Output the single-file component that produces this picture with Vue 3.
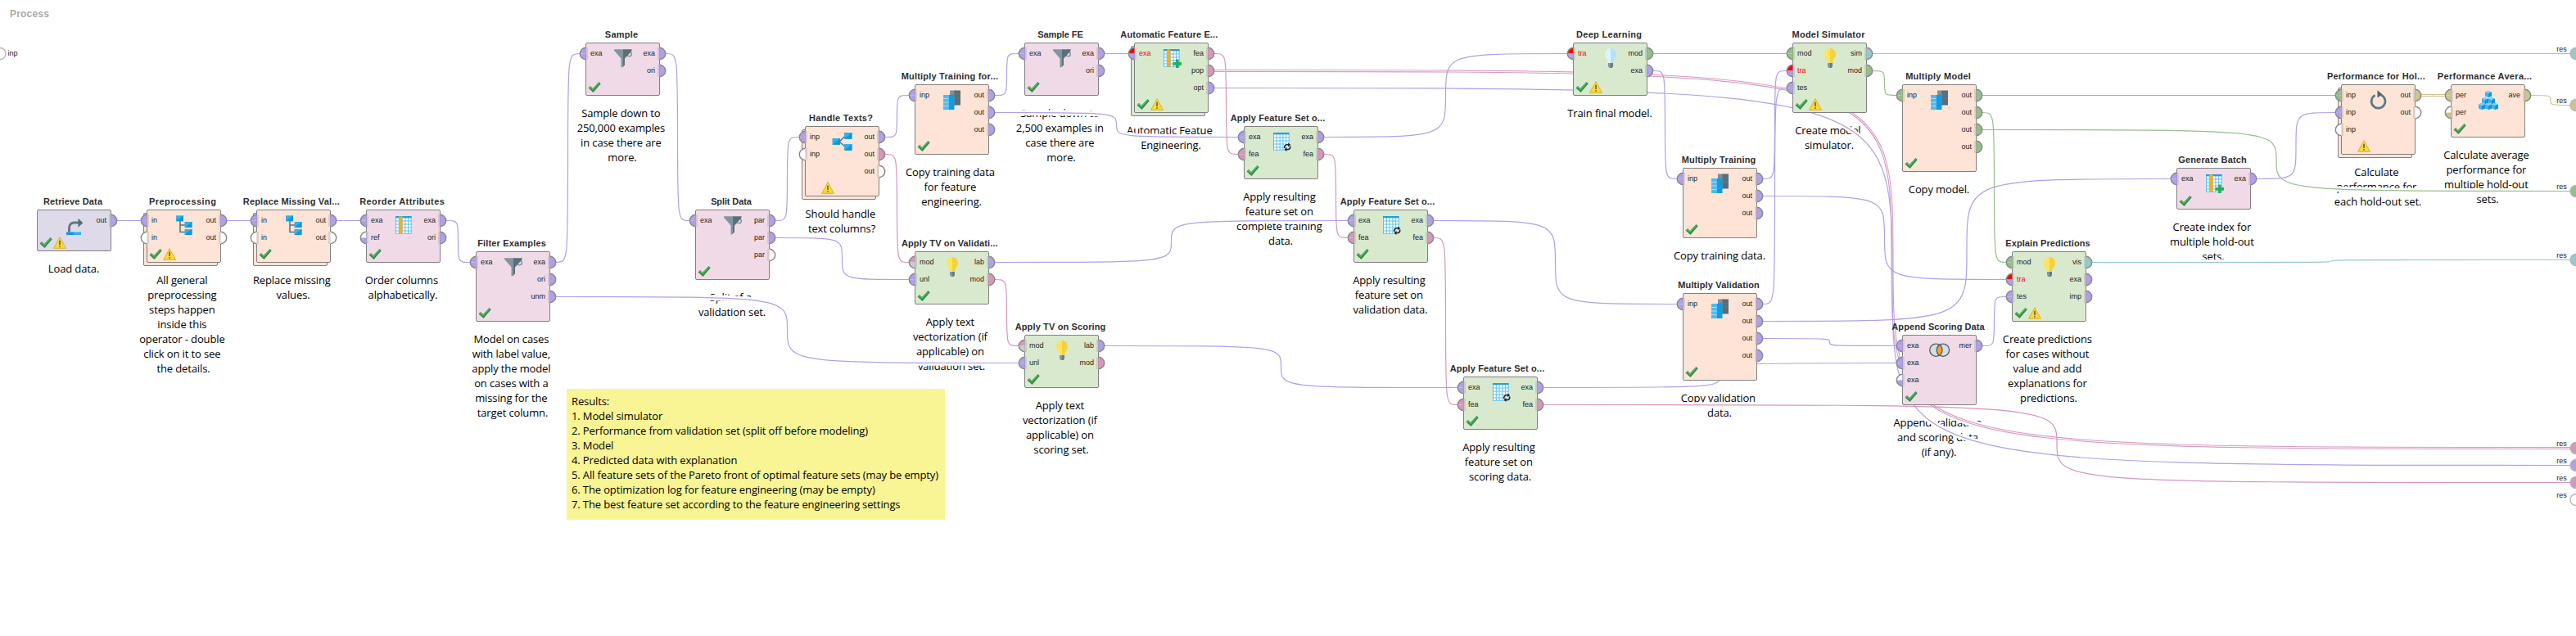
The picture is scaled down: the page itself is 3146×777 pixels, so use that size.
<script setup>
const C = {
  v: '#b0a0e8', p: '#d796be', g: '#96be8c', c: '#96c8cd', o: '#cdc391',
  w: '#ffffff', r: '#ff0000', s: '#cccccc'
}

// Ports are written as "label:fill" where fill is one colour key, or two (top, bottom).
const port = (s) => {
  const [label, f] = s.split(':')
  return { label, top: C[f[0]], bottom: C[f[1] || f[0]], err: f[0] === 'r' }
}
const node = (title, tw, x, y, kind, icon, ins, outs, badges, desc, stacked) => {
  const i = ins ? ins.split(' ').map(port) : []
  const o = outs ? outs.split(' ').map(port) : []
  const n = Math.max(i.length, o.length)
  const h = n === 1 ? 51 : 23 + 21 * n
  // Truncated titles sit slightly left of centre.
  const tx = !title.endsWith('...') ? 65 : tw < 116 ? 62.5 : 63.8
  return { title, tw, tx, x, y, h, kind, icon, ins: i, outs: o, badges, stacked, desc: desc.join(' \n') }
}

const nodes = [
  node('Retrieve Data', 72, 45, 256, 'data', 'retrieve', '', 'out:v', 'cw', ['Load data.']),
  node('Preprocessing', 82, 179, 256, 'flow', 'tree', 'in:v in:w', 'out:v out:w', 'cw',
    ['All general', 'preprocessing', 'steps happen', 'inside this', 'operator - double', 'click on it to see', 'the details.'], true),
  node('Replace Missing Val...', 118, 313, 256, 'flow', 'tree', 'in:v in:w', 'out:v out:w', 'c', ['Replace missing', 'values.'], true),
  node('Reorder Attributes', 103.6, 447, 256, 'prep', 'column', 'exa:v ref:wv', 'exa:v ori:v', 'c', ['Order columns', 'alphabetically.']),
  node('Filter Examples', 83.7, 581, 307, 'prep', 'funnel', 'exa:v', 'exa:v ori:v unm:v', 'c',
    ['Model on cases', 'with label value,', 'apply the model', 'on cases with a', 'missing for the', 'target column.']),
  node('Sample', 40.3, 715, 52, 'prep', 'funnel', 'exa:v', 'exa:v ori:v', 'c',
    ['Sample down to', '250,000 examples', 'in case there are', 'more.']),
  node('Split Data', 49.7, 849, 256, 'prep', 'funnel', 'exa:v', 'par:v par:v par:w', 'c', ['Split of a', 'validation set.']),
  node('Handle Texts?', 78, 983, 154, 'flow', 'branch', 'inp:v inp:w', 'out:v out:p out:w', 'w', ['Should handle', 'text columns?'], true),
  node('Multiply Training for...', 118.3, 1117, 103, 'flow', 'multiply', 'inp:v', 'out:v out:v out:v', 'c',
    ['Copy training data', 'for feature', 'engineering.']),
  node('Apply TV on Validati...', 117.7, 1117, 307, 'model', 'bulb', 'mod:ps unl:v', 'lab:v mod:p', 'c',
    ['Apply text', 'vectorization (if', 'applicable) on', 'validation set.']),
  node('Sample FE', 55.7, 1251, 52, 'prep', 'funnel', 'exa:v', 'exa:v ori:v', 'c',
    ['Sample down to', '2,500 examples in', 'case there are', 'more.']),
  node('Apply TV on Scoring', 110.7, 1251, 409, 'model', 'bulb', 'mod:ps unl:v', 'lab:v mod:p', 'c',
    ['Apply text', 'vectorization (if', 'applicable) on', 'scoring set.']),
  node('Automatic Feature E...', 119, 1385, 52, 'model', 'columnPlus', 'exa:rv', 'fea:p pop:p opt:v', 'cw',
    ['Automatic Featue', 'Engineering.'], true),
  node('Apply Feature Set o...', 115.7, 1519, 154, 'model', 'tableSync', 'exa:v fea:p', 'exa:v fea:p', 'c',
    ['Apply resulting', 'feature set on', 'complete training', 'data.']),
  node('Apply Feature Set o...', 115.7, 1653, 256, 'model', 'tableSync', 'exa:v fea:p', 'exa:v fea:p', 'c',
    ['Apply resulting', 'feature set on', 'validation data.']),
  node('Apply Feature Set o...', 115.7, 1787, 460, 'model', 'tableSync', 'exa:v fea:p', 'exa:v fea:p', 'c',
    ['Apply resulting', 'feature set on', 'scoring data.']),
  node('Deep Learning', 80, 1921, 52, 'model', 'bulbPale', 'tra:rv', 'mod:g exa:v', 'cw', ['Train final model.']),
  node('Multiply Training', 90.7, 2055, 205, 'flow', 'multiply', 'inp:v', 'out:v out:v out:v', 'c', ['Copy training data.']),
  node('Multiply Validation', 99.7, 2055, 358, 'flow', 'multiply', 'inp:v', 'out:v out:v out:v out:v', 'c', ['Copy validation', 'data.']),
  node('Model Simulator', 89, 2189, 52, 'model', 'bulb', 'mod:g tra:rv tes:v', 'sim:c mod:g', 'cw', ['Create model', 'simulator.']),
  node('Multiply Model', 79.7, 2323, 103, 'flow', 'multiply', 'inp:g', 'out:g out:g out:g out:g', 'c', ['Copy model.']),
  node('Append Scoring Data', 113.3, 2323, 409, 'prep', 'join', 'exa:v exa:v exa:wv', 'mer:v', 'c',
    ['Append validation', 'and scoring data', '(if any).']),
  node('Explain Predictions', 103.3, 2457, 307, 'model', 'bulb', 'mod:g tra:rv tes:v', 'vis:c exa:v imp:v', 'cw',
    ['Create predictions', 'for cases without', 'value and add', 'explanations for', 'predictions.']),
  node('Generate Batch', 83.6, 2658, 205, 'prep', 'columnPlus', 'exa:v', 'exa:v', 'c', ['Create index for', 'multiple hold-out', 'sets.']),
  node('Performance for Hol...', 119.8, 2859, 103, 'flow', 'loop', 'inp:g inp:v inp:w', 'out:o out:w', 'w',
    ['Calculate', 'performance for', 'each hold-out set.'], true),
  node('Performance Avera...', 115.3, 2993, 103, 'flow', 'cubes', 'per:o per:wo', 'ave:o', 'c',
    ['Calculate average', 'performance for', 'multiple hold-out', 'sets.'])
]

// [from node, output index, to node or result index, input index, colour, double]
const links = [
  [0, 0, 1, 0, 'v'], [1, 0, 2, 0, 'v'], [2, 0, 3, 0, 'v'], [3, 0, 4, 0, 'v'],
  [4, 0, 5, 0, 'v'], [4, 2, 11, 1, 'v'], [5, 0, 6, 0, 'v'], [6, 0, 7, 0, 'v'], [6, 1, 9, 1, 'v'],
  [7, 0, 8, 0, 'v'], [7, 1, 9, 0, 'p'], [8, 0, 10, 0, 'v'], [8, 1, 13, 0, 'v'],
  [9, 0, 14, 0, 'v'], [9, 1, 11, 0, 'p'], [10, 0, 12, 0, 'v'], [11, 0, 15, 0, 'v'],
  [12, 0, 13, 1, 'p'], [12, 1, 'r', 4, 'p', true], [12, 2, 'r', 5, 'v'],
  [13, 0, 16, 0, 'v'], [13, 1, 14, 1, 'p'], [14, 0, 18, 0, 'v'], [14, 1, 15, 1, 'p'],
  [15, 0, 21, 1, 'v'], [15, 1, 'r', 6, 'p'], [16, 0, 19, 0, 'g'], [16, 1, 17, 0, 'v'],
  [17, 0, 19, 1, 'v'], [17, 1, 22, 1, 'v'], [18, 0, 19, 2, 'v'], [18, 1, 23, 0, 'v'], [18, 2, 21, 0, 'v'],
  [19, 0, 'r', 0, 'c'], [19, 1, 20, 0, 'g'], [20, 0, 24, 0, 'g'], [20, 1, 22, 0, 'g'], [20, 2, 'r', 2, 'g'],
  [21, 0, 22, 2, 'v'], [22, 0, 'r', 3, 'c'], [23, 0, 24, 1, 'v'], [24, 0, 25, 0, 'o', true], [25, 0, 'r', 1, 'o']
]

const results = [
  { y: 65.5, f: C.c }, { y: 128.5, f: C.o }, { y: 233.5, f: C.g }, { y: 317.5, f: C.c },
  { y: 547.5, f: C.p }, { y: 568.5, f: C.v }, { y: 589.5, f: C.p }, { y: 610.5, f: C.w }
]

const wires = links.map(([a, ai, b, bi, k, dbl]) => {
  const x1 = nodes[a].x + 98
  const y1 = nodes[a].y + 13.5 + 21 * ai
  const x2 = b === 'r' ? 3139 : nodes[b].x - 7
  const y2 = b === 'r' ? results[bi].y : nodes[b].y + 13.5 + 21 * bi
  const mx = (x1 + x2) / 2
  const my = (y1 + y2) / 2
  return { d: `M${x1} ${y1}C${mx} ${y1} ${mx} ${y1} ${mx} ${my}C${mx} ${y2} ${mx} ${y2} ${x2} ${y2}`, color: C[k], dbl }
})

const notes = [
  'Results:', '1. Model simulator', '2. Performance from validation set (split off before modeling)', '3. Model',
  '4. Predicted data with explanation', '5. All feature sets of the Pareto front of optimal feature sets (may be empty)',
  '6. The optimization log for feature engineering (may be empty)', '7. The best feature set according to the feature engineering settings'
]
</script>

<template>
  <main class="canvas">
    <div class="crumb">Process</div>

    <section v-for="(n, i) in nodes" :key="'d' + i" class="desc" :style="{ left: n.x - 36 + 'px', top: n.y + n.h + 'px' }">{{ n.desc }}</section>

    <aside class="note">
      <p v-for="l in notes" :key="l">{{ l }}</p>
    </aside>

    <svg class="wires" width="3146" height="777" fill="none">
      <path v-for="(w, i) in wires" :key="'h' + i" :d="w.d" stroke="#fff" :stroke-width="w.dbl ? 8 : 6.6" />
      <template v-for="(w, i) in wires" :key="'w' + i">
        <path :d="w.d" :stroke="w.color" :stroke-width="w.dbl ? 3 : 1.2" />
        <path v-if="w.dbl" :d="w.d" stroke="#fff" stroke-width="1" />
      </template>
      <g class="res">
        <template v-for="r in results" :key="r.y">
          <text x="3134.8" :y="r.y - 2.5" text-anchor="end">res</text>
          <circle cx="3146" :cy="r.y" r="7" :fill="r.f" stroke="#b4b4b4" stroke-width="1.4" />
        </template>
        <text x="9.5" y="68">inp</text>
        <circle cx="0" cy="65.5" r="7" fill="#fff" stroke="#b4b4b4" stroke-width="1.4" />
      </g>
    </svg>

    <article v-for="(n, i) in nodes" :key="i" class="node" :class="n.kind" :style="{ left: n.x + 'px', top: n.y + 'px', height: n.h + 'px' }">
      <div v-if="n.stacked" class="shadow"></div>
      <svg class="title" width="130" height="16">
        <text :x="n.tx" y="12" text-anchor="middle" :textLength="n.tw">{{ n.title }}</text>
      </svg>
      <div class="face">
        <ul class="ports ins">
          <li v-for="(p, k) in n.ins" :key="k">
            <svg width="12" height="17" viewBox="0 0 12 17">
              <path d="M8.5 8.5H1.5A7 7 0 0 1 8.5 1.5Z" :fill="p.top" />
              <path d="M8.5 8.5H1.5A7 7 0 0 0 8.5 15.5Z" :fill="p.bottom" />
              <path d="M8.5 1.3A7.2 7.2 0 0 0 8.5 15.7" fill="none" stroke="#888" stroke-width="1.4" />
              <rect x="8" y="1" width="1" height="15" :fill="p.bottom" opacity=".5" />
              <rect x="9" y="1" width="2" height="15" fill="#888" opacity=".25" />
            </svg>
            <span :class="{ err: p.err }">{{ p.label }}</span>
          </li>
        </ul>
        <svg class="icon" width="24" height="25" viewBox="0 0 24 25">
          <g v-if="n.icon === 'funnel'">
            <circle cx="19.5" cy="7" r="2.8" fill="none" stroke="#7f98a3" stroke-width="1.5" />
            <path d="M1 1.3H12V23L9.5 23.5V12.5L2 3.8L1 3Z" fill="#80969f" />
            <path d="M12 1.3H22.5V3.3L14 12.5V20.5L12 22.5Z" fill="#5a6f7a" />
          </g>
          <g v-else-if="n.icon === 'bulb' || n.icon === 'bulbPale'">
            <path d="M12 0A7.3 7.3 0 0 0 6.3 11.5C8 13.5 8.6 15 8.8 17.7H12Z" :fill="n.icon === 'bulb' ? '#fbe55f' : '#dff2fd'" />
            <path d="M12 0A7.3 7.3 0 0 1 17.7 11.5C16 13.5 15.4 15 15.2 17.7H12Z" :fill="n.icon === 'bulb' ? '#f5d23c' : '#b0e2fa'" />
            <path d="M9 18H15V22L13.5 24H10.5L9 22Z" fill="#8296a0" />
            <path d="M12 18H15V22L13.5 24H12Z" fill="#687c87" />
          </g>
          <g v-else-if="n.icon === 'tree'">
            <path d="M7 7V20.5H13M7 12H13" fill="none" stroke="#5a6f7a" stroke-width="1.5" />
            <g v-for="s in [[2, 0.3], [12.5, 8], [12.5, 17]]" :key="s[1]">
              <rect :x="s[0]" :y="s[1]" width="9" height="7" fill="#2fb1ea" />
              <path :d="`M${s[0] + 9} ${s[1]}v7h-9z`" fill="#1296db" />
            </g>
          </g>
          <g v-else-if="n.icon === 'branch'">
            <path d="M8 12L16 4.5M8 12L16 19" fill="none" stroke="#5a6f7a" stroke-width="1.5" />
            <g v-for="s in [[-0.5, 8], [14, 1], [14, 15]]" :key="s[1]">
              <rect :x="s[0]" :y="s[1]" width="9.5" height="7.7" fill="#2fb1ea" />
              <path :d="`M${s[0] + 9.5} ${s[1]}v7.7h-9.5z`" fill="#1296db" />
            </g>
          </g>
          <g v-else-if="n.icon === 'multiply'">
            <rect x="9" y="0.5" width="7" height="18" fill="#7c919c" />
            <rect x="14.5" y="0.5" width="7.5" height="18" fill="#596d78" />
            <path d="M9 5.2H22M9 10H22" stroke="#70848f" stroke-width=".5" />
            <rect x="1" y="6" width="7.5" height="18" fill="#4fbaf0" />
            <rect x="8" y="6" width="6.5" height="18" fill="#149ade" />
            <path d="M1 10.5H7.5M1 15H7.5M1 19.5H7.5" stroke="#c5e7f8" stroke-width=".8" />
          </g>
          <g v-else-if="n.icon === 'retrieve'">
            <path d="M5.5 20.5V15.5Q5.5 9 12 9H17.5" fill="none" stroke="#5f7783" stroke-width="2.8" />
            <path d="M16.5 3.7L22.3 9.2L16.5 14.7Z" fill="#566d79" />
            <rect x="2" y="20.5" width="9" height="3.5" fill="#1296db" />
            <rect x="11" y="20.5" width="9" height="3.5" fill="#2fb1ea" />
          </g>
          <g v-else-if="n.icon === 'join'">
            <circle cx="7.3" cy="11.7" r="7.6" fill="#d5dfe3" stroke="#4b606b" stroke-width="1.3" />
            <circle cx="16" cy="11.7" r="7.6" fill="#d5dfe3" stroke="#4b606b" stroke-width="1.3" />
            <path d="M11.65 5.4A7.6 7.6 0 0 1 11.65 18A7.6 7.6 0 0 1 11.65 5.4Z" fill="#f9a414" stroke="#4b606b" stroke-width="1.3" />
          </g>
          <g v-else-if="n.icon === 'loop'">
            <path d="M14.2 5.8A8.4 8.4 0 1 1 7.6 6.4" fill="none" stroke="#5f7783" stroke-width="2.7" />
            <path d="M10.5 0.3L16.5 5.2L10.5 9.5Z" fill="#4f6671" />
          </g>
          <g v-else-if="n.icon === 'cubes'">
            <g v-for="s in [[12, 1], [8, 9], [16, 9], [4, 16], [12, 16], [20, 16]]" :key="s.join()">
              <path :d="`M${s[0] - 4} ${s[1] + 1.5}l4 -1.5l4 1.5v5l-4 1.5l-4 -1.5z`" fill="#3fb3ee" />
              <path :d="`M${s[0]} ${s[1] + 2.5}l4 -1v5l-4 1.5z`" fill="#1492dc" />
              <path :d="`M${s[0] - 4} ${s[1] + 1.5}l4 -1.5l4 1.5l-4 1.5z`" fill="#7fd0f7" />
            </g>
          </g>
          <g v-else>
            <rect x="2" y="1" width="19.5" height="21.7" fill="#fff" />
            <path d="M2.5 3V22.5M6.3 3V22.5M10.1 3V22.5M13.9 3V22.5M17.7 3V22.5M21.2 3V22.5M2 7H21.5M2 11H21.5M2 15H21.5M2 19H21.5M2 22.3H21.5" stroke="#4bbcef" stroke-width=".9" />
            <rect x="2" y="1" width="19.7" height="2.3" fill="#1fa0e0" />
            <rect v-if="n.icon !== 'tableSync'" x="6" y="1.5" width="4.5" height="21" fill="#fbab1c" />
            <path v-if="n.icon === 'columnPlus'" d="M17 13.5h3.6v3.6h3.4v3.6h-3.4v3.3h-3.6v-3.3h-3.5v-3.6h3.5z" fill="#27ae60" />
            <g v-if="n.icon === 'tableSync'">
              <circle cx="19.2" cy="18.7" r="4.6" fill="#e6f0e6" opacity=".7" />
              <path d="M16 21.5H20.5Q23 21 22.8 17.5M22.5 15.8H18Q15.5 16.5 15.7 20" fill="none" stroke="#222" stroke-width="1.5" />
              <path d="M18.5 19L15.5 21.5L18.5 24ZM20 13.4L23 15.9L20 18.3Z" fill="#222" />
            </g>
          </g>
        </svg>
        <ul class="ports outs">
          <li v-for="(p, k) in n.outs" :key="k">
            <span>{{ p.label }}</span>
            <svg width="12" height="17" viewBox="0 0 12 17">
              <path d="M3.5 1.5A7 7 0 0 1 3.5 15.5Z" :fill="p.top" />
              <path d="M3.5 1.3A7.2 7.2 0 0 1 3.5 15.7" fill="none" stroke="#888" stroke-width="1.4" />
              <rect x="3" y="1" width="1" height="15" :fill="p.bottom" opacity=".5" />
              <rect x="1" y="1" width="2" height="15" fill="#888" opacity=".25" />
            </svg>
          </li>
        </ul>
      </div>
      <div class="badges">
        <svg width="16" height="15" viewBox="0 0 16 15">
          <g v-if="n.badges.includes('c')">
            <path d="M0.5 8.5L3 6L6 9L13.5 1L15.7 3.2L6.5 14Z" fill="#2f8f46" />
            <path d="M2 8.3L3 7.4L6 10.4L13.5 2.4" fill="none" stroke="#5fb56c" stroke-width="1.3" />
          </g>
        </svg>
        <svg v-if="n.badges.includes('w')" width="16" height="15" viewBox="0 0 16 15">
          <path d="M8 0.7L15.4 14.3H0.6Z" fill="#fdd835" stroke="#dfb02c" stroke-width="1" stroke-linejoin="round" />
          <path d="M8 4.8V10M8 11.2V12.8" stroke="#4a5a60" stroke-width="1.5" />
        </svg>
      </div>
    </article>
  </main>
</template>

<style scoped>
.canvas {
  position: relative;
  width: 3146px;
  height: 777px;
  overflow: hidden;
  background: #fff;
  font-family: "Open Sans", "Noto Sans", sans-serif;
  color: #000;
}
.crumb {
  padding: 9px 0 0 12px;
  font: bold 12px/16px "Liberation Sans", Arial, sans-serif;
  letter-spacing: 0.2px;
  color: #aaa;
}
.wires { position: absolute; left: 0; top: 0; }
.res text { font: 9px "Liberation Sans", Arial, sans-serif; fill: #222; }
.desc {
  position: absolute;
  width: 162px;
  padding-top: 12px;
  text-align: center;
  white-space: pre;
  font-size: 13px;
  line-height: 18px;
  letter-spacing: -0.125px;
}
.note {
  position: absolute;
  left: 692px;
  top: 475px;
  width: 462px;
  height: 160px;
  box-sizing: border-box;
  padding: 6px;
  background: #f9f595;
}
.note p {
  margin: 0;
  font-size: 13px;
  line-height: 18px;
  letter-spacing: -0.125px;
  white-space: nowrap;
}
.node {
  position: absolute;
  width: 91px;
  display: flex;
  flex-direction: column;
  justify-content: flex-end;
}
.face, .shadow {
  position: absolute;
  inset: 0;
  box-sizing: border-box;
  border: 1px solid #808080;
  border-radius: 2px;
}
.shadow { left: -4px; top: 4px; right: 4px; bottom: -4px; }
.face { display: flex; justify-content: space-between; padding-top: 2px; }
.data > .face, .data > .shadow { background: #dedaea; }
.flow > .face, .flow > .shadow { background: #fde4d6; }
.prep > .face, .prep > .shadow { background: #f1dae7; }
.model > .face, .model > .shadow { background: #d9e9ce; }
.title { position: absolute; left: -21px; top: -18px; }
.title text { font: bold 11px "Liberation Sans", Arial, sans-serif; fill: #2d2d2d; }
.ports { list-style: none; margin: 0; padding: 0; width: 33px; }
.ports li {
  display: flex;
  align-items: center;
  height: 21px;
  font: 9px/21px "Liberation Sans", Arial, sans-serif;
  color: #222;
}
.ports svg { flex: none; }
.ins li svg { margin: 0 2px 0 -9px; }
.outs li { justify-content: flex-end; }
.outs li svg { margin: 0 -9px 0 2px; }
.ports .err { color: #f00; }
.icon { margin-top: 4px; flex: none; overflow: visible; }
.badges { position: relative; display: flex; gap: 1px; padding: 0 0 3px 3px; }
</style>
